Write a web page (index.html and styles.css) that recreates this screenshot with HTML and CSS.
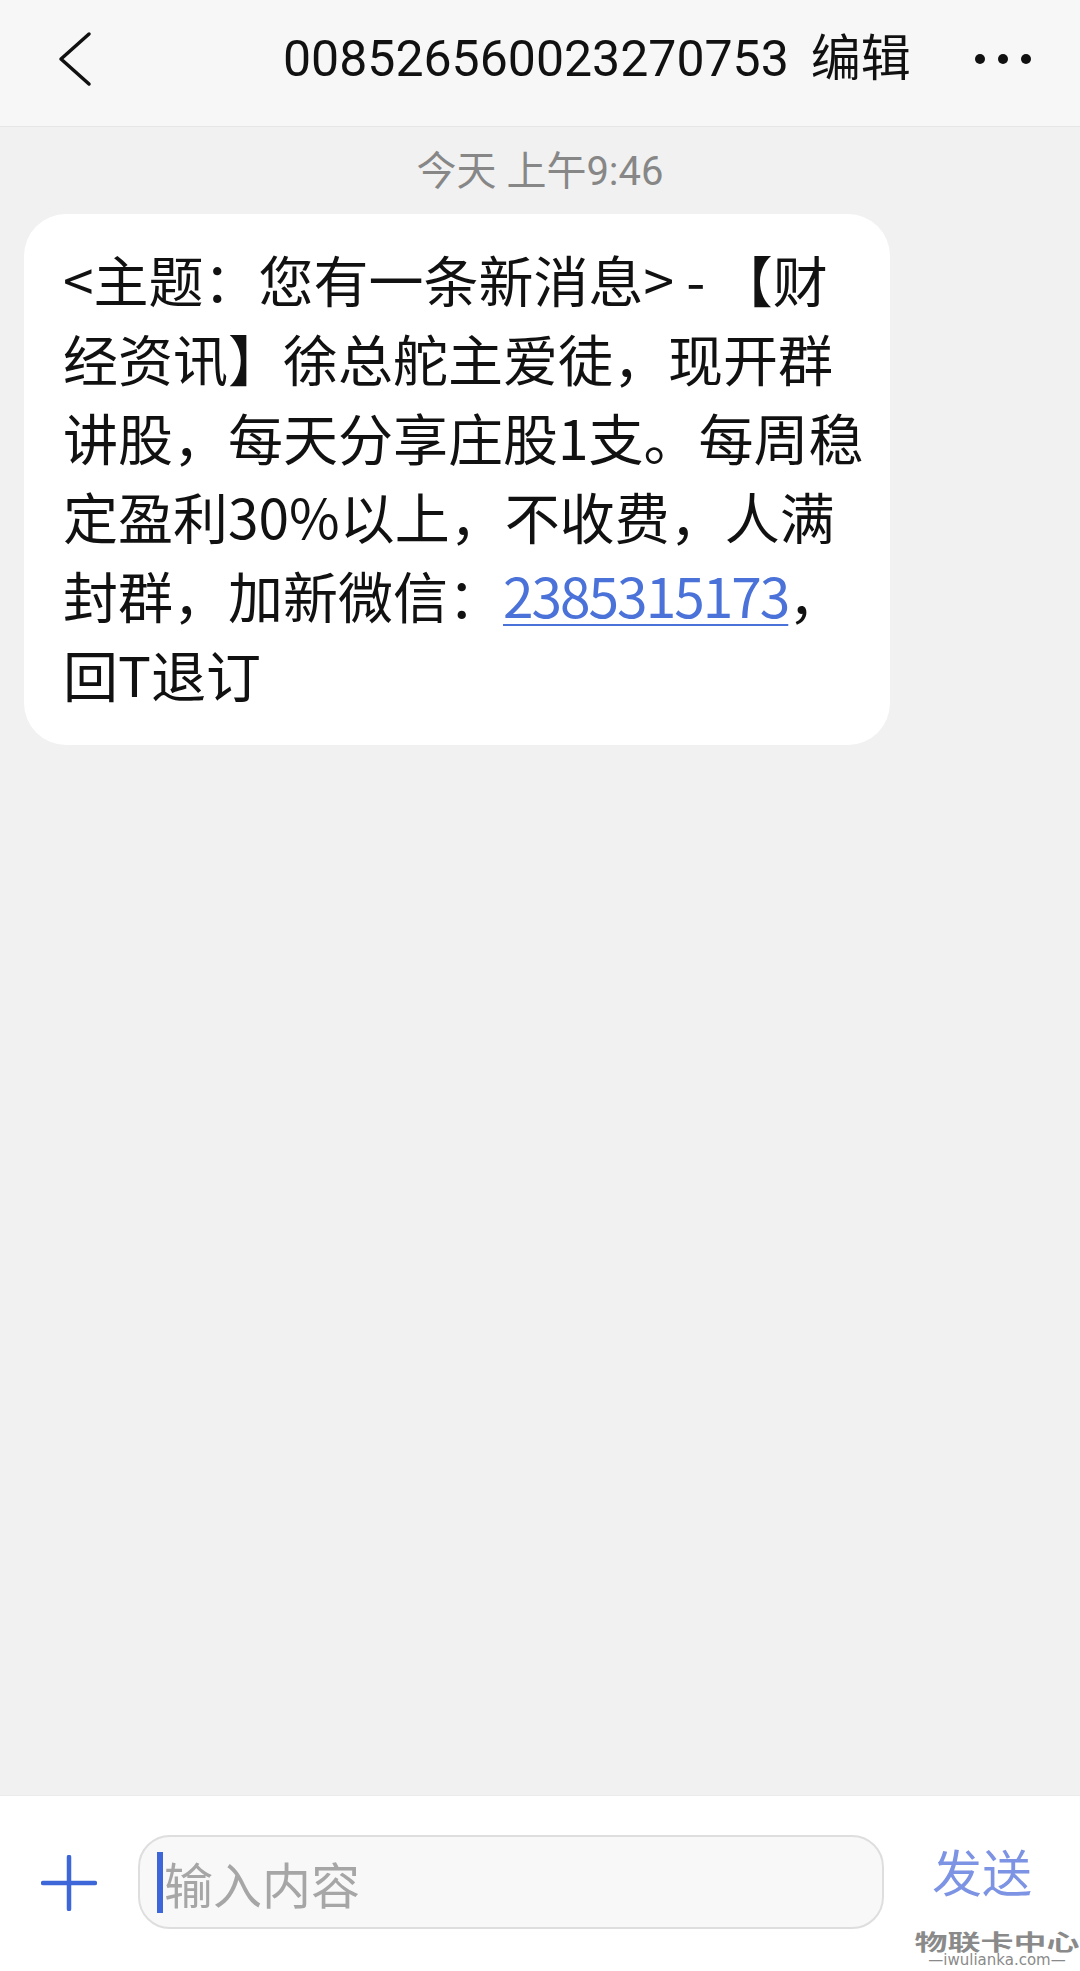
FILE: index.html
```html
<!DOCTYPE html>
<html lang="zh-CN">
<head>
    <meta charset="UTF-8">
    <meta name="viewport" content="width=device-width, initial-scale=1.0">
    <title>008526560023270753</title>
    <link rel="stylesheet" href="styles.css">
</head>
<body>
    <div class="page">
        <header class="topbar">
            <svg class="back" width="34" height="56" viewBox="0 0 34 56">
                <polyline points="31,3 3,28 31,53" fill="none" stroke="#111" stroke-width="3.5" stroke-linecap="round" stroke-linejoin="round"/>
            </svg>
            <div class="title">008526560023270753<span class="edit">编辑</span></div>
            <div class="more">
                <span class="dot"></span>
                <span class="dot"></span>
                <span class="dot"></span>
            </div>
        </header>

        <main class="thread">
            <div class="time">今天 上午9:46</div>
            <div class="bubble">&lt;主题：您有一条新消息&gt; - 【财经资讯】徐总舵主爱徒，现开群讲股，每天分享庄股1支。每周稳定盈利30%以上，不收费，人满封群，加新微信：<a class="link" href="#">2385315173</a>，回T退订</div>
        </main>

        <footer class="composer">
            <svg class="plus" width="56" height="56" viewBox="0 0 56 56">
                <line x1="28" y1="2" x2="28" y2="54" stroke="#3d67d9" stroke-width="4.5" stroke-linecap="round"/>
                <line x1="2" y1="28" x2="54" y2="28" stroke="#3d67d9" stroke-width="4.5" stroke-linecap="round"/>
            </svg>
            <div class="field">
                <span class="caret"></span>
                <span class="placeholder">输入内容</span>
            </div>
            <div class="send">发送</div>
            <div class="watermark">
                <div class="wm-name">物联卡中心</div>
                <div class="wm-url">—iwulianka.com—</div>
            </div>
        </footer>
    </div>
</body>
</html>
```

FILE: styles.css
```css
body {
    margin: 0;
    font-family: "Noto Sans CJK SC", sans-serif;
    background: #f1f1f1;
}
.page {
    width: 1080px;
    height: 1971px;
    display: flex;
    flex-direction: column;
    position: relative;
}
.topbar {
    height: 127px;
    box-sizing: border-box;
    display: flex;
    align-items: center;
    padding: 0 49px 8px 58px;
    background: #f7f7f7;
    border-bottom: 1px solid #e6e6e6;
}
.back {
    flex-shrink: 0;
}
.title {
    margin-left: 191px;
    font-family: Roboto, "Noto Sans CJK SC", sans-serif;
    font-size: 50px;
    line-height: 60px;
    color: #111;
    white-space: nowrap;
}
.edit {
    margin-left: 22px;
}
.more {
    margin-left: auto;
    display: flex;
    gap: 13px;
}
.dot {
    width: 10px;
    height: 10px;
    border-radius: 50%;
    background: #111;
}
.thread {
    flex: 1;
    background: #f1f1f1;
    display: flex;
    flex-direction: column;
    align-items: flex-start;
}
.time {
    align-self: center;
    margin-top: 19px;
    font-family: Roboto, "Noto Sans CJK SC", sans-serif;
    font-size: 40px;
    line-height: 52px;
    color: #878787;
}
.bubble {
    width: 866px;
    box-sizing: border-box;
    margin: 16px 0 0 24px;
    padding: 25px 22px 32px 39px;
    background: #fff;
    border-radius: 42px;
    font-size: 55px;
    line-height: 79px;
    color: #111;
}
.link {
    color: #4a72d8;
    letter-spacing: -2px;
    text-decoration: underline;
    text-decoration-thickness: 2px;
    text-underline-offset: 6px;
}
.composer {
    height: 176px;
    box-sizing: border-box;
    display: flex;
    align-items: flex-start;
    padding: 39px 48px 0 41px;
    background: #fff;
    border-top: 1px solid #ebebeb;
}
.plus {
    flex-shrink: 0;
    margin-top: 20px;
}
.field {
    width: 746px;
    height: 94px;
    box-sizing: border-box;
    margin-left: 41px;
    display: flex;
    align-items: center;
    padding-left: 17px;
    background: #f8f8f8;
    border: 2px solid #dedede;
    border-radius: 32px;
}
.caret {
    width: 6px;
    height: 61px;
    background: #3d67d9;
    flex-shrink: 0;
}
.placeholder {
    margin-left: 1px;
    font-size: 49px;
    color: #a6a6a6;
}
.send {
    margin-left: 48px;
    margin-top: 5px;
    font-size: 50px;
    line-height: 60px;
    color: #7d93e3;
}
.watermark {
    position: absolute;
    right: 0;
    bottom: 3px;
    width: 166px;
    text-align: center;
    color: #8a8a8a;
    white-space: nowrap;
}
.wm-name {
    font-size: 33px;
    line-height: 22px;
    font-weight: 700;
    transform: scaleY(0.66);
}
.wm-url {
    font-family: "DejaVu Sans", sans-serif;
    font-size: 15px;
    line-height: 16px;
}
```
